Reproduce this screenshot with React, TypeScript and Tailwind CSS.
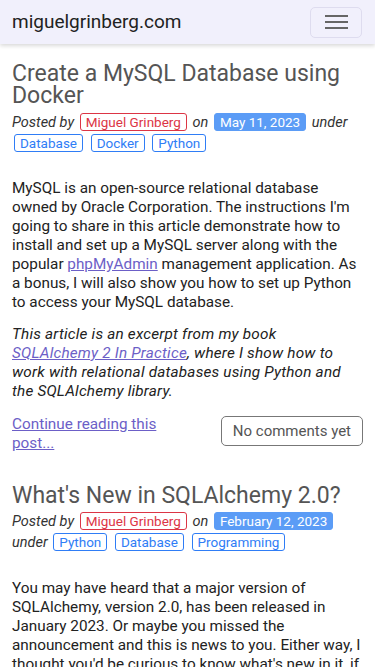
import React from "react";

type Post = {
  title: string;
  date: string;
  tags: string[];
};

function Meta({ post }: { post: Post }) {
  return (
    <div className="text-[14.5px] leading-[21px] text-[#333]">
      <span className="italic">Posted by</span>{" "}
      <span className="mx-[2px] inline-block rounded-[3px] border border-[#dc3545] px-[5px] text-[13.5px] leading-[16px] text-[#dc3545]">
        Miguel Grinberg
      </span>{" "}
      <span className="italic">on</span>{" "}
      <span className="mx-[2px] inline-block rounded-[3px] border border-[#5b9cf6] bg-[#5b9cf6] px-[5px] text-[13.5px] leading-[16px] text-white">
        {post.date}
      </span>{" "}
      <span className="italic">under</span>{" "}
      {post.tags.map((t) => (
        <React.Fragment key={t}>
          <span className="mx-[2px] inline-block rounded-[3px] border border-[#2f7df6] px-[5px] text-[13.5px] leading-[16px] text-[#2f7df6]">
            {t}
          </span>{" "}
        </React.Fragment>
      ))}
    </div>
  );
}

function App() {
  const first: Post = {
    title: "Create a MySQL Database using Docker",
    date: "May 11, 2023",
    tags: ["Database", "Docker", "Python"],
  };
  const second: Post = {
    title: "What's New in SQLAlchemy 2.0?",
    date: "February 12, 2023",
    tags: ["Python", "Database", "Programming"],
  };
  return (
    <div className="min-h-[667px] bg-white font-['Roboto',sans-serif] text-[#222]">
      <nav className="flex h-11 items-center justify-between bg-[#f1f0fc] pl-3 pr-[13px] shadow-[0_2px_4px_rgba(0,0,0,0.15)]">
        <span className="text-[19px] text-[#222]">miguelgrinberg.com</span>
        <button className="flex h-[31px] w-[52px] flex-col items-center justify-center gap-[4px] rounded-[5px] border border-[#dedcef]">
          <span className="h-[2px] w-[23px] bg-[#666]" />
          <span className="h-[2px] w-[23px] bg-[#666]" />
          <span className="h-[2px] w-[23px] bg-[#666]" />
        </button>
      </nav>

      <main className="px-3">
        <article className="pt-[19px]">
          <h1 className="text-[23px] leading-[22px] text-[#555]">{first.title}</h1>
          <div className="mt-[5px]">
            <Meta post={first} />
          </div>
          <p className="mt-[25px] text-[15.3px] leading-[19px]">
            MySQL is an open-source relational database owned by Oracle Corporation. The instructions I'm going to share in this article demonstrate how to install and set up a MySQL server along with the popular{" "}
            <a className="text-[#6c5fc7] underline">phpMyAdmin</a> management application. As a bonus, I will also show you how to set up Python to access your MySQL database.
          </p>
          <p className="mt-[13px] pr-2 text-[15.3px] leading-[19px] tracking-[0.2px] italic">
            This article is an excerpt from my book{" "}
            <a className="whitespace-nowrap text-[#6c5fc7] underline">SQLAlchemy 2 In Practice</a>, where I show how to work with relational databases using Python and the SQLAlchemy library.
          </p>
          <div className="mt-[14px] flex items-start justify-between">
            <a className="w-1/2 text-[15.3px] leading-[19px] text-[#6c5fc7] underline">Continue reading this post...</a>
            <button className="mt-[1px] h-[30px] rounded-[5px] border border-[#777] px-[11px] text-[15px] text-[#555]">
              No comments yet
            </button>
          </div>
        </article>

        <article className="pt-[32px]">
          <h1 className="text-[23px] leading-[22px] text-[#555]">{second.title}</h1>
          <div className="mt-[4px]">
            <Meta post={second} />
          </div>
          <p className="mt-[26px] text-[15.3px] leading-[19px]">
            You may have heard that a major version of SQLAlchemy, version 2.0, has been released in January 2023. Or maybe you missed the announcement and this is news to you. Either way, I thought you'd be curious to know what's new in it, if you are a SQLAlchemy user.
          </p>
        </article>
      </main>
    </div>
  );
}

export default App;
